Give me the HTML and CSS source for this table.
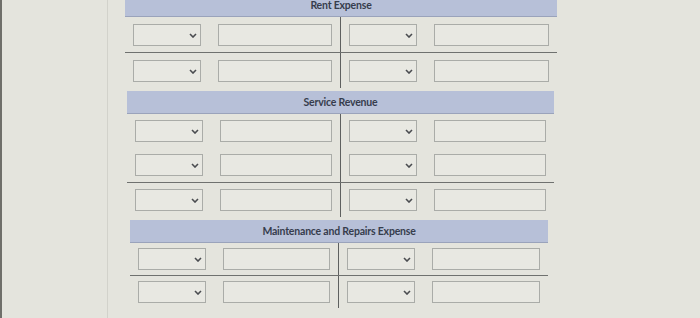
FILE: index.html
```html
<!DOCTYPE html>
<html>
<head>
<meta charset="utf-8">
<link rel="stylesheet" href="styles.css">
</head>
<body>
<div class="page">
  <section class="acct s1">
    <div class="head">Rent Expense</div>
    <div class="row sep">
      <div class="half left"><div class="sel"><svg viewBox="0 0 8 5"><path d="M1 1l3 3 3-3"/></svg></div><div class="inp"></div></div>
      <div class="half"><div class="sel"><svg viewBox="0 0 8 5"><path d="M1 1l3 3 3-3"/></svg></div><div class="inp"></div></div>
    </div>
    <div class="row last">
      <div class="half left"><div class="sel"><svg viewBox="0 0 8 5"><path d="M1 1l3 3 3-3"/></svg></div><div class="inp"></div></div>
      <div class="half"><div class="sel"><svg viewBox="0 0 8 5"><path d="M1 1l3 3 3-3"/></svg></div><div class="inp"></div></div>
    </div>
  </section>
  <section class="acct s2">
    <div class="head">Service Revenue</div>
    <div class="row">
      <div class="half left"><div class="sel"><svg viewBox="0 0 8 5"><path d="M1 1l3 3 3-3"/></svg></div><div class="inp"></div></div>
      <div class="half"><div class="sel"><svg viewBox="0 0 8 5"><path d="M1 1l3 3 3-3"/></svg></div><div class="inp"></div></div>
    </div>
    <div class="row sep">
      <div class="half left"><div class="sel"><svg viewBox="0 0 8 5"><path d="M1 1l3 3 3-3"/></svg></div><div class="inp"></div></div>
      <div class="half"><div class="sel"><svg viewBox="0 0 8 5"><path d="M1 1l3 3 3-3"/></svg></div><div class="inp"></div></div>
    </div>
    <div class="row">
      <div class="half left"><div class="sel"><svg viewBox="0 0 8 5"><path d="M1 1l3 3 3-3"/></svg></div><div class="inp"></div></div>
      <div class="half"><div class="sel"><svg viewBox="0 0 8 5"><path d="M1 1l3 3 3-3"/></svg></div><div class="inp"></div></div>
    </div>
  </section>
  <section class="acct s3">
    <div class="head">Maintenance and Repairs Expense</div>
    <div class="row sep">
      <div class="half left"><div class="sel"><svg viewBox="0 0 8 5"><path d="M1 1l3 3 3-3"/></svg></div><div class="inp"></div></div>
      <div class="half"><div class="sel"><svg viewBox="0 0 8 5"><path d="M1 1l3 3 3-3"/></svg></div><div class="inp"></div></div>
    </div>
    <div class="row">
      <div class="half left"><div class="sel"><svg viewBox="0 0 8 5"><path d="M1 1l3 3 3-3"/></svg></div><div class="inp"></div></div>
      <div class="half"><div class="sel"><svg viewBox="0 0 8 5"><path d="M1 1l3 3 3-3"/></svg></div><div class="inp"></div></div>
    </div>
  </section>
</div>
</body>
</html>
```

FILE: styles.css
```css
html, body {
  margin: 0;
  padding: 0;
  height: 100%;
}
body {
  background: #e4e4dd;
  border-left: 2px solid #6f6f6a;
  font-family: Lato, "Liberation Sans", sans-serif;
  overflow: hidden;
}
.page {
  margin-left: 105px;
  border-left: 1px solid #d2d2cb;
  min-height: calc(100% + 6px);
  margin-top: -6px;
  padding-left: 17px;
  box-sizing: border-box;
}
.acct {
  display: flex;
  flex-direction: column;
  margin-bottom: 3px;
}
.s1 { width: 432px; margin-left: 0; }
.s2 { width: 427px; margin-left: 2px; }
.s3 { width: 418px; margin-left: 5px; }

.head {
  height: 22px;
  background: #b7c0d8;
  border-bottom: 1px solid #9aa3bb;
  color: #363d4d;
  font-size: 10.5px;
  font-weight: 700;
  letter-spacing: -0.2px;
  display: flex;
  align-items: center;
  justify-content: center;
}
.row {
  display: grid;
  grid-template-columns: 1fr 1fr;
}
.row.sep {
  border-bottom: 1px solid #6f716f;
}
.half {
  display: flex;
  align-items: center;
  gap: 17px;
  padding: 6px 8px;
}
.s1 .half { padding-top: 7px; }
.s1 .last .half { padding-bottom: 6px; }
.s3 .half { padding-top: 5px; padding-bottom: 5px; }
.half.left {
  border-right: 1px solid #5e605f;
}
.sel, .inp {
  height: 22px;
  box-sizing: border-box;
  border: 1px solid #aaaca8;
  background: #e8e8e2;
}
.sel {
  width: 68px;
  flex: none;
  display: flex;
  align-items: center;
  justify-content: flex-end;
  padding-right: 3px;
}
.sel svg {
  width: 8px;
  height: 5px;
  fill: none;
  stroke: #4a4c50;
  stroke-width: 1.6;
}
.inp {
  flex: 1;
}
```
